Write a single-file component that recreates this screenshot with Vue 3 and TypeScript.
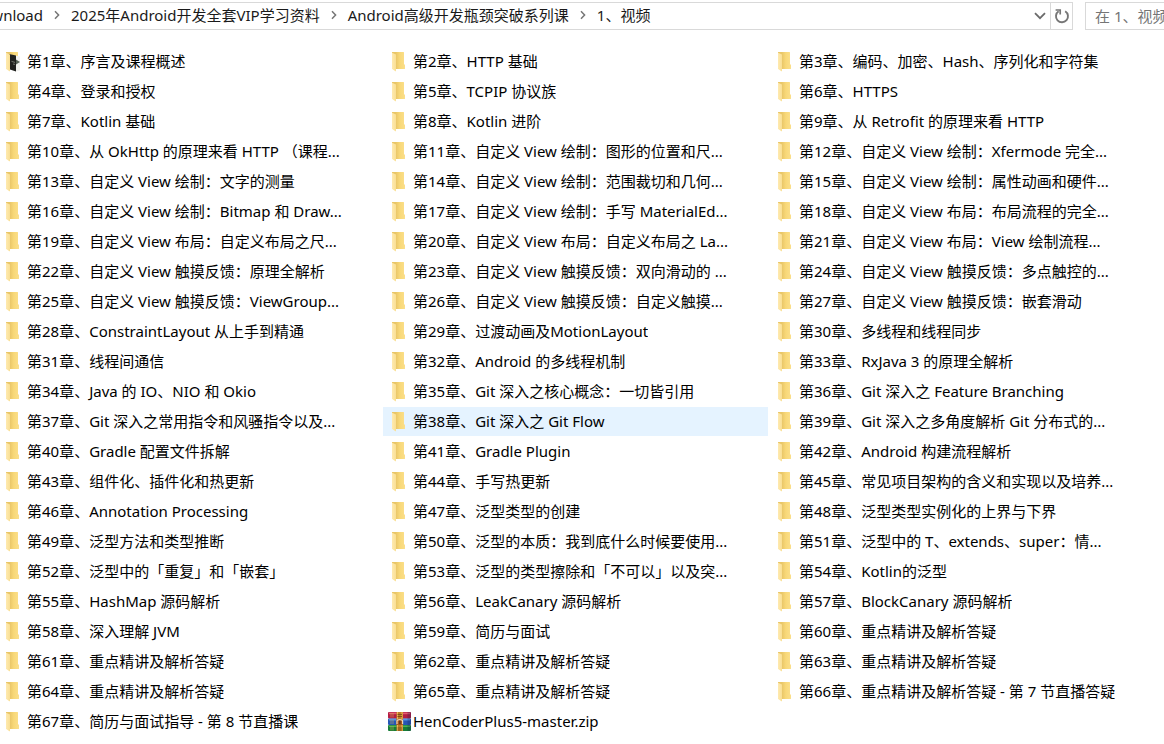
<script setup lang="ts">
import { ref } from 'vue'

interface Entry {
  name: string
  kind: 'folder' | 'preview' | 'archive'
}

const crumbs: string[] = ['Download', '2025年Android开发全套VIP学习资料', 'Android高级开发瓶颈突破系列课', '1、视频']

const titles: string[] = [
  '序言及课程概述',
  'HTTP 基础',
  '编码、加密、Hash、序列化和字符集',
  '登录和授权',
  'TCPIP 协议族',
  'HTTPS',
  'Kotlin 基础',
  'Kotlin 进阶',
  '从 Retrofit 的原理来看 HTTP',
  '从 OkHttp 的原理来看 HTTP （课程...',
  '自定义 View 绘制：图形的位置和尺...',
  '自定义 View 绘制：Xfermode 完全...',
  '自定义 View 绘制：文字的测量',
  '自定义 View 绘制：范围裁切和几何...',
  '自定义 View 绘制：属性动画和硬件...',
  '自定义 View 绘制：Bitmap 和 Draw...',
  '自定义 View 绘制：手写 MaterialEd...',
  '自定义 View 布局：布局流程的完全...',
  '自定义 View 布局：自定义布局之尺...',
  '自定义 View 布局：自定义布局之 La...',
  '自定义 View 布局：View 绘制流程...',
  '自定义 View 触摸反馈：原理全解析',
  '自定义 View 触摸反馈：双向滑动的 ...',
  '自定义 View 触摸反馈：多点触控的...',
  '自定义 View 触摸反馈：ViewGroup...',
  '自定义 View 触摸反馈：自定义触摸...',
  '自定义 View 触摸反馈：嵌套滑动',
  'ConstraintLayout 从上手到精通',
  '过渡动画及MotionLayout',
  '多线程和线程同步',
  '线程间通信',
  'Android 的多线程机制',
  'RxJava 3 的原理全解析',
  'Java 的 IO、NIO 和 Okio',
  'Git 深入之核心概念：一切皆引用',
  'Git 深入之 Feature Branching',
  'Git 深入之常用指令和风骚指令以及...',
  'Git 深入之 Git Flow',
  'Git 深入之多角度解析 Git 分布式的...',
  'Gradle 配置文件拆解',
  'Gradle Plugin',
  'Android 构建流程解析',
  '组件化、插件化和热更新',
  '手写热更新',
  '常见项目架构的含义和实现以及培养...',
  'Annotation Processing',
  '泛型类型的创建',
  '泛型类型实例化的上界与下界',
  '泛型方法和类型推断',
  '泛型的本质：我到底什么时候要使用...',
  '泛型中的 T、extends、super：情...',
  '泛型中的「重复」和「嵌套」',
  '泛型的类型擦除和「不可以」以及突...',
  'Kotlin的泛型',
  'HashMap 源码解析',
  'LeakCanary 源码解析',
  'BlockCanary 源码解析',
  '深入理解 JVM',
  '简历与面试',
  '重点精讲及解析答疑',
  '重点精讲及解析答疑',
  '重点精讲及解析答疑',
  '重点精讲及解析答疑',
  '重点精讲及解析答疑',
  '重点精讲及解析答疑',
  '重点精讲及解析答疑 - 第 7 节直播答疑',
  '简历与面试指导 - 第 8 节直播课',
]

const entries: Entry[] = [
  ...titles.map((title, i): Entry => ({
    name: `第${i + 1}章、${title}`,
    kind: i === 0 ? 'preview' : 'folder',
  })),
  { name: 'HenCoderPlus5-master.zip', kind: 'archive' },
]

const active = ref(37)
const query = ref('')
</script>

<template>
  <div class="explorer">
    <header class="toolbar">
      <div class="address">
        <nav class="crumbs" aria-label="路径">
          <template v-for="(crumb, i) in crumbs" :key="crumb">
            <svg v-if="i > 0" class="sep" width="28" height="10" viewBox="0 0 28 10" aria-hidden="true">
              <path d="M12 1.2 15.6 5 12 8.8" fill="none" stroke="#767676" stroke-width="1.5" />
            </svg>
            <button type="button" class="crumb" :class="{ clipped: i === 0 }">{{ crumb }}</button>
          </template>
        </nav>
        <button type="button" class="tool history" aria-label="以前的位置">
          <svg width="12" height="8" viewBox="0 0 12 8" aria-hidden="true">
            <path d="M1 1.2 6 6.2 11 1.2" fill="none" stroke="#6b6b6b" stroke-width="1.8" />
          </svg>
        </button>
        <button type="button" class="tool refresh" aria-label="刷新">
          <svg width="16" height="16" viewBox="0 0 16 16" aria-hidden="true">
            <path d="M11.2 3.2A6 6 0 1 1 4.6 3.3" fill="none" stroke="#767676" stroke-width="1.9" />
            <path d="M1.6 2H6.2V6.6" fill="none" stroke="#767676" stroke-width="1.7" />
          </svg>
        </button>
      </div>
      <input v-model="query" class="search" type="text" aria-label="搜索" placeholder="在 1、视频 中搜索" />
    </header>

    <main>
      <ul class="files">
        <li v-for="(entry, i) in entries" :key="i">
          <button type="button" class="file" :class="{ active: active === i }" @click="active = i">
            <span class="icon">
              <svg v-if="entry.kind === 'archive'" width="24" height="20" viewBox="0 0 24 20" aria-hidden="true">
                <rect x="0" y="0" width="23" height="6.5" rx="1" fill="#b41d43" />
                <rect x="1" y="0.6" width="21" height="1.6" fill="#e25a70" />
                <rect x="0" y="6.5" width="23" height="6.5" rx="1" fill="#2656b5" />
                <rect x="1" y="7" width="21" height="1.5" fill="#5794e5" />
                <rect x="0" y="13" width="23" height="6" rx="1" fill="#167d37" />
                <rect x="1" y="13.5" width="21" height="1.5" fill="#4bb254" />
                <path d="M3 1v4.5M5 1v4.5M3 7.5V12M5 7.5V12M3 14v4.5M5 14v4.5" stroke="#d1b354" stroke-width="0.6" />
                <rect x="8.5" y="0" width="6.5" height="19" fill="#bd7c25" />
                <path d="M9.5 0v19M14 0v19" stroke="#efb655" stroke-width="1" />
                <path d="M9.5 2.5H14M9.5 4.5H14M9.5 16H14M9.5 18H14" stroke="#704416" stroke-width="0.8" />
                <rect x="8.5" y="7" width="6.5" height="6" rx="1" fill="#a7561d" />
                <path d="M9 12V9Q9 7.6 11.8 7.6T14.6 9v3" fill="none" stroke="#ead6b5" stroke-width="1.2" />
                <rect x="11.2" y="8.6" width="1.4" height="3.6" fill="#523224" />
                <path d="M19.5 0H23v19h-3.5z" fill="#17204a" opacity="0.25" />
              </svg>
              <svg v-else class="folder" width="18" height="20" viewBox="0 0 18 20" aria-hidden="true">
                <defs>
                  <linearGradient :id="`back${i}`" x1="0" x2="1">
                    <stop offset="0.3" stop-color="#e9c668" />
                    <stop offset="0.6" stop-color="#f8d878" />
                    <stop offset="1" stop-color="#fbdf8b" />
                  </linearGradient>
                  <linearGradient :id="`flap${i}`" x1="0" x2="1">
                    <stop offset="0" stop-color="#ffeab0" />
                    <stop offset="1" stop-color="#f9df94" />
                  </linearGradient>
                </defs>
                <path d="M0 0H11.6Q12 0 12 .6V12.6H13V16.4Q13 17 12.4 17H0Z" :fill="`url(#back${i})`" />
                <template v-if="entry.kind === 'preview'">
                  <path d="M4 2.6 14 4.4V18.4L10 19.4 4 17Z" fill="#f1f1ef" />
                  <path d="M3 2 10 3.4V19.4L4 17.4Z" fill="#20211f" />
                  <path d="M10 7.6 14 10 10 12.4Z" fill="#566257" />
                  <path d="M5.5 9.4 9 10.4M7 12l2 .4" stroke="#73766e" stroke-width="1" />
                </template>
                <path d="M0 .8 4 2.6V18.4Q4 19.8 3 19L.5 17.3Q0 17 0 16.4Z" :fill="`url(#flap${i})`" />
              </svg>
            </span>
            <span class="name">{{ entry.name }}</span>
          </button>
        </li>
      </ul>
    </main>
  </div>
</template>

<style>
body {
  margin: 0;
  background: #fff;
}
</style>

<style scoped>
.explorer {
  overflow: hidden;
  min-height: 100vh;
  background: #fff;
  color: #000;
  font-family: "Noto Sans", "Noto Sans CJK SC", sans-serif;
  font-size: 15px;
  line-height: 20px;
}

button,
input {
  box-sizing: border-box;
  margin: 0;
  padding: 0;
  border: 0;
  border-radius: 0;
  background: none;
  color: inherit;
  font: inherit;
}

.toolbar {
  display: flex;
  gap: 12px;
  padding-top: 2px;
  overflow: hidden;
}

.address {
  box-sizing: border-box;
  display: flex;
  flex: none;
  width: calc(100% - 91px);
  height: 28px;
  border: 1px solid #d9d9d9;
  border-left: 0;
}

.crumbs {
  display: flex;
  flex: 1;
  align-items: center;
  min-width: 0;
  padding-bottom: 2px;
  overflow: hidden;
  color: #1a1a1a;
  white-space: nowrap;
}

.crumb {
  flex: none;
}

.crumb.clipped {
  display: flex;
  justify-content: flex-end;
  width: 43px;
  overflow: hidden;
}

.sep {
  flex: none;
}

.tool {
  display: flex;
  flex: none;
  align-items: center;
  justify-content: center;
  width: 21px;
}

.refresh {
  width: 22px;
  border-left: 1px solid #d9d9d9;
}

.search {
  flex: none;
  width: 240px;
  height: 28px;
  padding: 0 9px;
  border: 1px solid #d9d9d9;
}

.search::placeholder {
  color: #757575;
  opacity: 1;
}

.files {
  display: grid;
  grid-template-columns: repeat(3, minmax(0, 1fr));
  gap: 1px;
  margin: 17px 10px 0 -3px;
  padding: 0;
  list-style: none;
}

.file {
  display: flex;
  align-items: flex-start;
  width: 100%;
  height: 29px;
  padding: 4px 0 0 5px;
  text-align: left;
  white-space: nowrap;
}

.file.active {
  background: #e5f3ff;
}

.icon {
  display: flex;
  flex: none;
  width: 25px;
  padding-top: 1px;
}

.folder {
  margin-left: 4px;
}

.name {
  overflow: hidden;
}
</style>
